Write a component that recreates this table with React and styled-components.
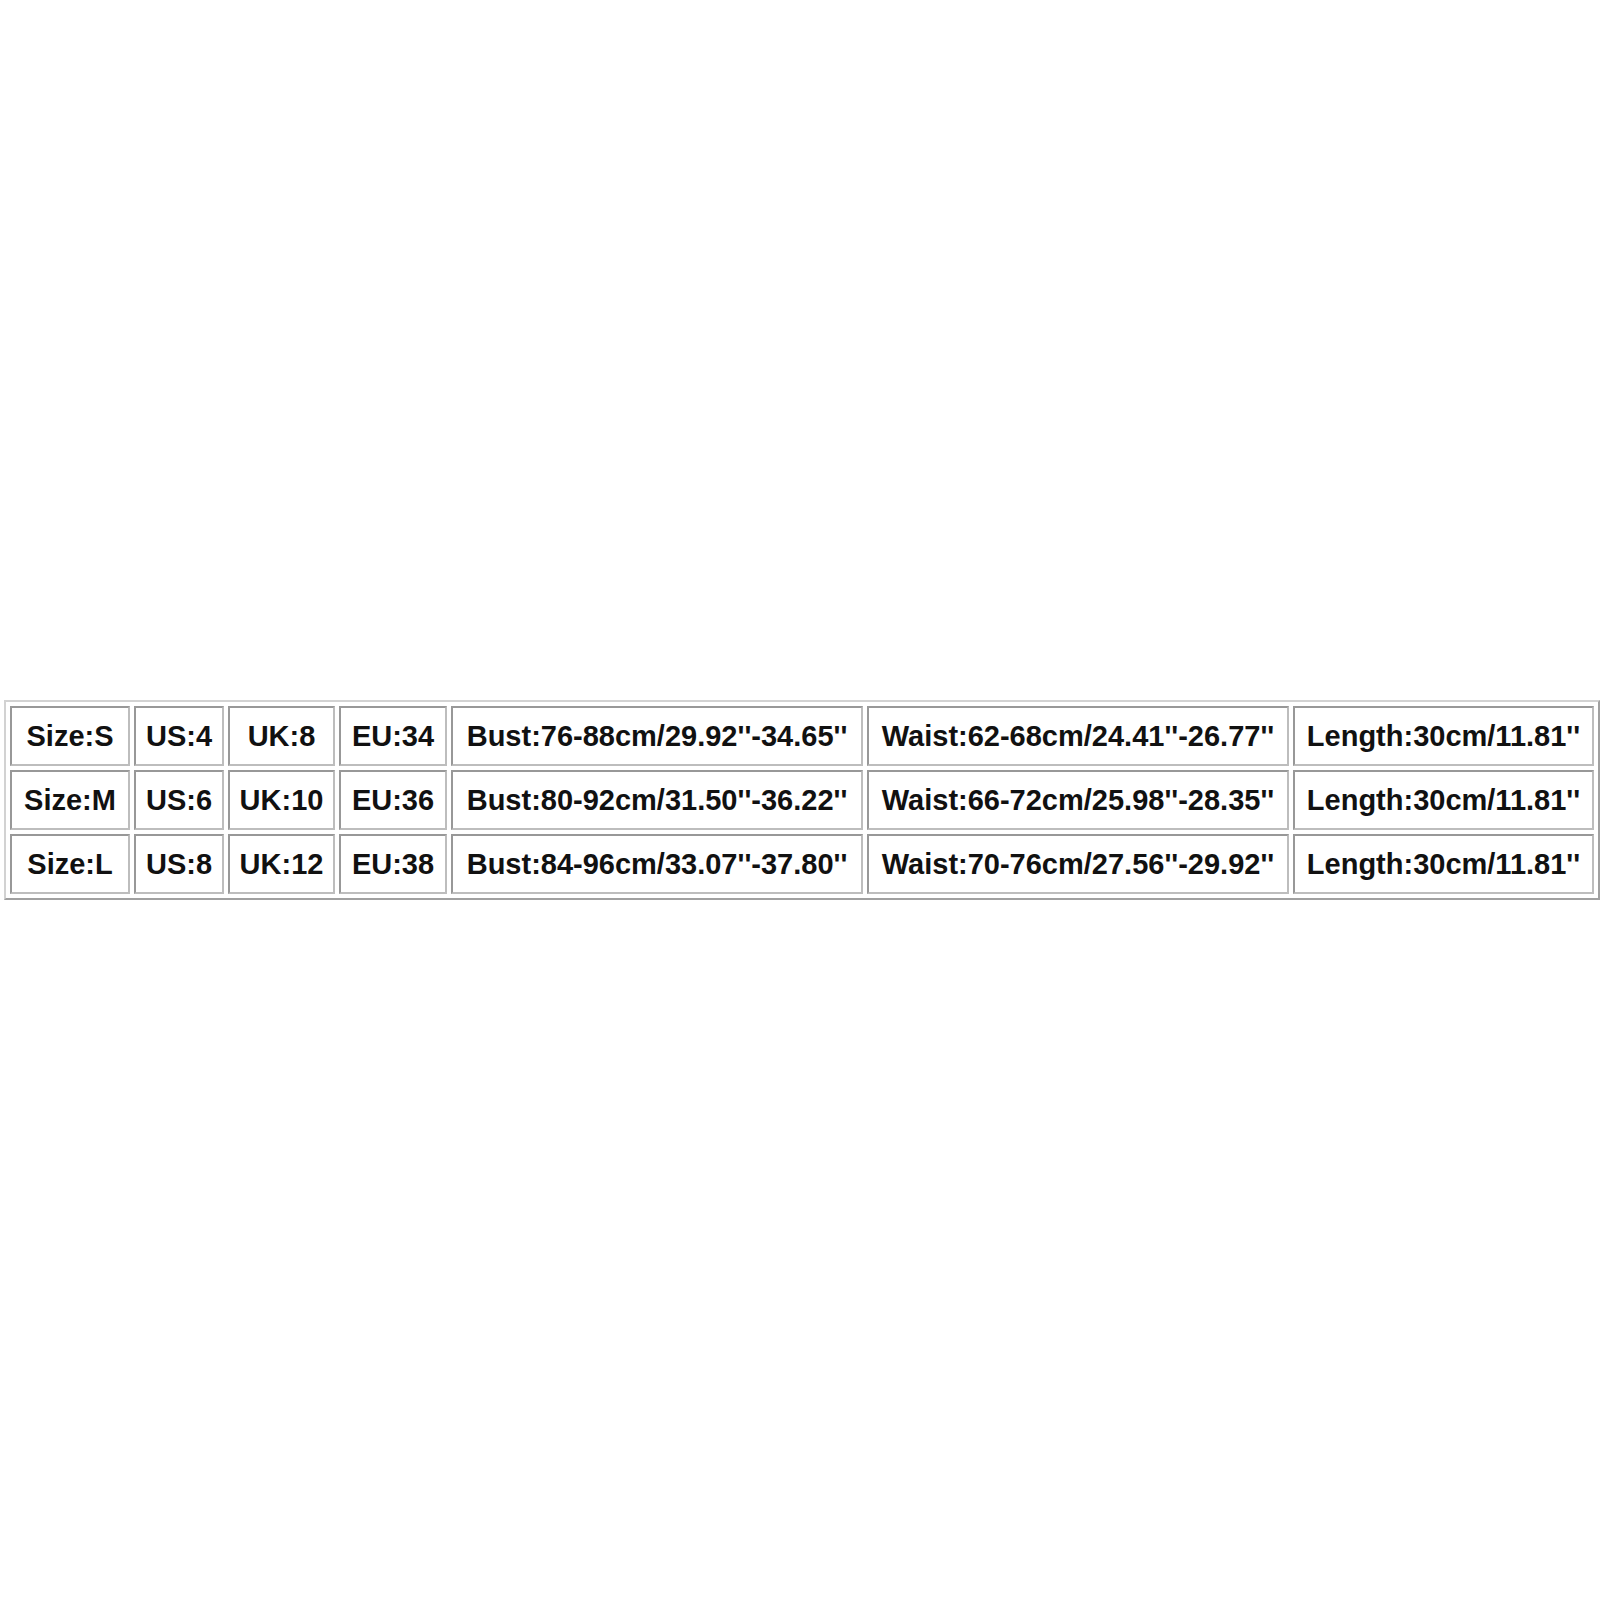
import React from 'react';
import styled, { createGlobalStyle } from 'styled-components';

const GlobalStyle = createGlobalStyle`
  html, body {
    margin: 0;
    padding: 0;
    background: #ffffff;
  }
`;

const Page = styled.div`
  width: 1600px;
  height: 1600px;
  padding: 700px 0 0 4px;
  box-sizing: border-box;
  background: #fff;
`;

const SizeTable = styled.table`
  border-collapse: separate;
  border-spacing: 4px;
  border: 2px solid;
  border-color: #d2d2d2 #a0a0a0 #a0a0a0 #d2d2d2;
  table-layout: fixed;
  font-family: "Liberation Sans", Arial, sans-serif;
  font-weight: bold;
  font-size: 29px;
  color: #111;
`;

const Cell = styled.td`
  box-sizing: border-box;
  width: ${(p) => p.w}px;
  height: 60px;
  padding: 0;
  text-align: center;
  vertical-align: middle;
  white-space: nowrap;
  border: 2px solid;
  border-color: #989898 #bdbdbd #bdbdbd #989898;
  line-height: 1;
`;

const widths = [120, 90, 107, 108, 412, 422, 301];

const rows = [
  ['Size:S', 'US:4', 'UK:8', 'EU:34', "Bust:76-88cm/29.92''-34.65''", "Waist:62-68cm/24.41''-26.77''", "Length:30cm/11.81''"],
  ['Size:M', 'US:6', 'UK:10', 'EU:36', "Bust:80-92cm/31.50''-36.22''", "Waist:66-72cm/25.98''-28.35''", "Length:30cm/11.81''"],
  ['Size:L', 'US:8', 'UK:12', 'EU:38', "Bust:84-96cm/33.07''-37.80''", "Waist:70-76cm/27.56''-29.92''", "Length:30cm/11.81''"],
];

const App = () => (
  <>
    <GlobalStyle />
    <Page>
      <SizeTable>
        <tbody>
          {rows.map((row, i) => (
            <tr key={i}>
              {row.map((text, j) => (
                <Cell key={j} w={widths[j]}>{text}</Cell>
              ))}
            </tr>
          ))}
        </tbody>
      </SizeTable>
    </Page>
  </>
);

export default App;
